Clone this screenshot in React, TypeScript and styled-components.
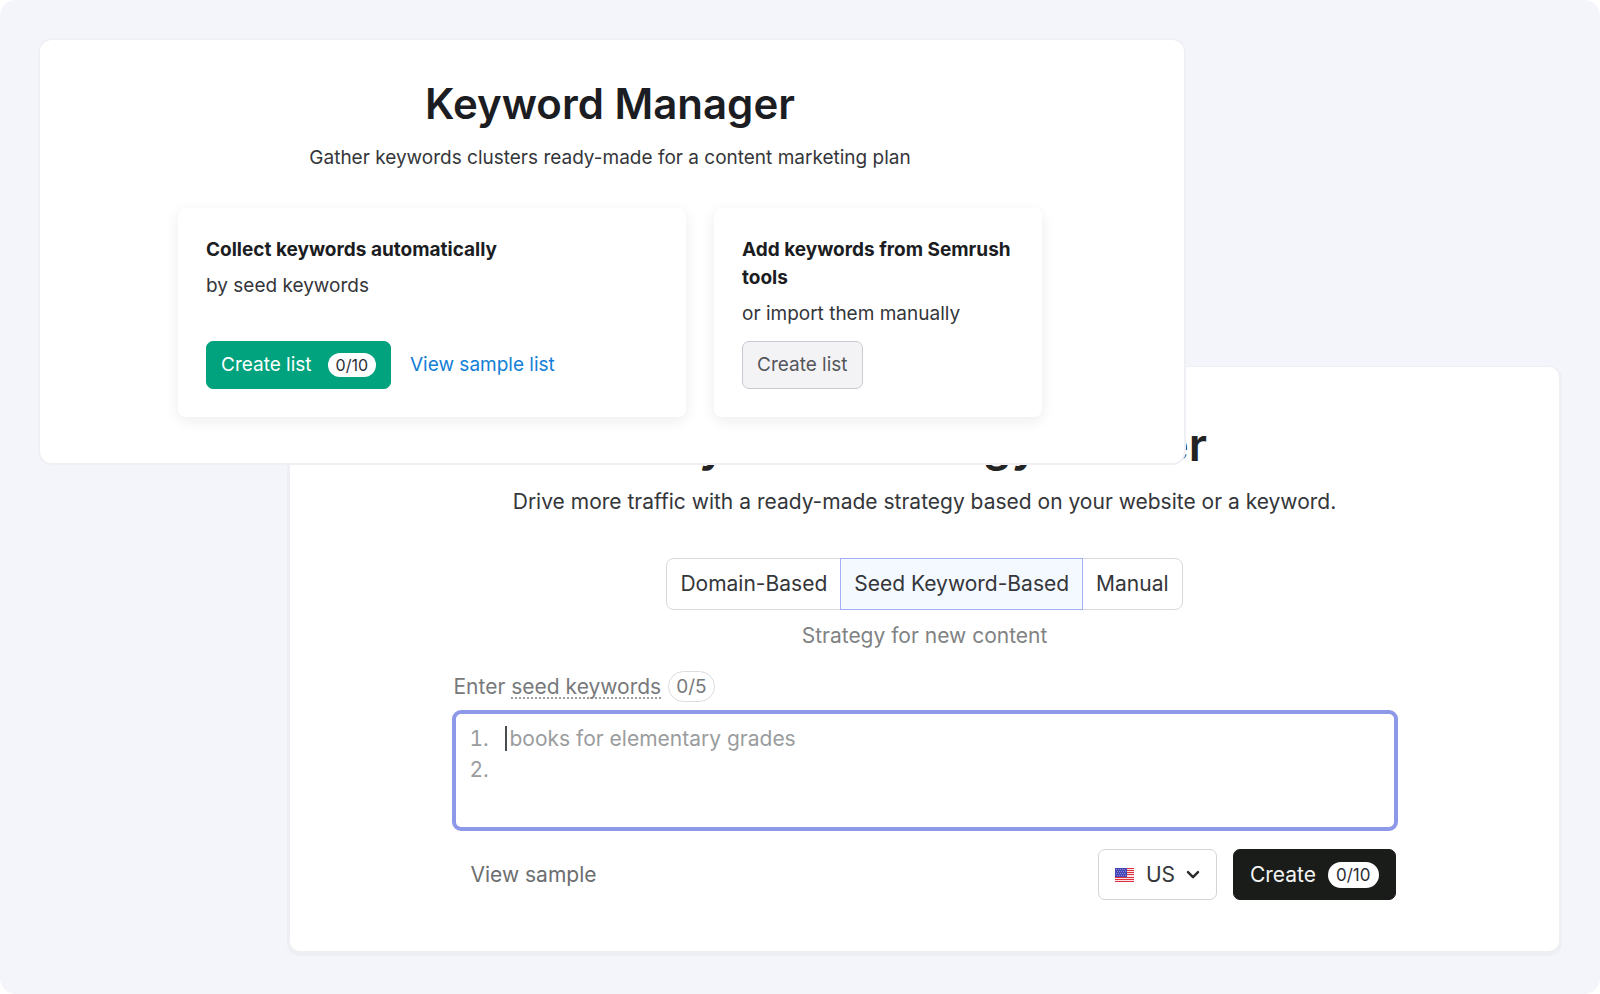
import React, { useState } from "react";
import styled, { createGlobalStyle, css } from "styled-components";

const GlobalStyle = createGlobalStyle`
  *, *::before, *::after { box-sizing: border-box; }
  body {
    margin: 0;
    background: #ffffff;
    color: #34363a;
    font-family: Inter, "Liberation Sans", sans-serif;
    font-size: 19px;
    line-height: 28px;
  }
  button, select, textarea { font: inherit; color: inherit; margin: 0; }
  h1, h2, h3, p, ol { margin: 0; padding: 0; }
`;

const Canvas = styled.main`
  display: grid;
  grid-template-columns: minmax(0, 249fr) minmax(0, 899fr) minmax(0, 374fr);
  align-items: start;
  min-height: 100vh;
  padding: 38px 40px 38px 38px;
  border-radius: 16px;
  background: #f4f5fa;
`;

const Panel = styled.section`
  display: flex;
  flex-direction: column;
  align-items: center;
  border-radius: 14px;
  background: #ffffff;
`;

const ManagerPanel = styled(Panel)`
  grid-area: 1 / 1 / 2 / 3;
  z-index: 1;
  padding: 38px 28px 46px 24px;
  border: 2px solid #f0f0f4;
`;

const BuilderPanel = styled(Panel)`
  grid-area: 1 / 2 / 2 / 4;
  margin: 329px 1px 0 3px;
  padding: 49px 24px 51px;
  border-radius: 10px;
  box-shadow: 0 2px 0 3px #eeeff2;
  font-size: 21px;
  line-height: 32px;
`;

const ManagerTitle = styled.h1`
  color: #1b1d22;
  font-size: 42px;
  font-weight: 600;
  line-height: 52px;
`;

const BuilderTitle = styled.h2`
  color: #232323;
  font-size: 46px;
  font-weight: 600;
  line-height: 56px;
`;

const Lead = styled.p`
  margin-top: 14px;
  text-align: center;
`;

const Cards = styled.div`
  display: flex;
  gap: 28px;
  width: 100%;
  max-width: 864px;
  margin-top: 36px;
`;

const Card = styled.article<{ $share: number }>`
  display: flex;
  flex: ${({ $share }) => `${$share} ${$share} ${$share}px`};
  flex-direction: column;
  align-items: flex-start;
  gap: 8px;
  min-width: 0;
  min-height: 209px;
  padding: 28px;
  border-radius: 8px;
  background: #ffffff;
  box-shadow: 0 4px 14px rgba(25, 27, 35, 0.08);
`;

const CardTitle = styled.h3`
  color: #1b1d22;
  font-size: 19px;
  font-weight: 700;
  line-height: 28px;
`;

const CardActions = styled.div`
  display: flex;
  align-items: center;
  gap: 19px;
  margin-top: auto;
`;

const tones = {
  green: css`
    border-color: #00a37d;
    background: #00a37d;
    color: #ffffff;
  `,
  gray: css`
    border-color: #c9cbd1;
    background: #f3f3f6;
    color: #54565c;
  `,
  black: css`
    border-color: #1a1c1a;
    background: #1a1c1a;
    color: #f4f4f4;
  `,
};

const Button = styled.button<{ $tone: keyof typeof tones; $large?: boolean }>`
  display: inline-flex;
  align-items: center;
  gap: ${({ $large }) => ($large ? 12 : 16)}px;
  height: ${({ $large }) => ($large ? 51 : 48)}px;
  padding: 0 ${({ $large }) => ($large ? 16 : 14)}px;
  border: 1px solid;
  border-radius: 7px;
  cursor: pointer;
  ${({ $tone }) => tones[$tone]}
`;

const Badge = styled.span<{ $large?: boolean }>`
  display: inline-flex;
  align-items: center;
  height: ${({ $large }) => ($large ? 26 : 24)}px;
  padding: 0 8px;
  border-radius: 13px;
  background: #ffffff;
  color: #2b2e33;
  font-size: ${({ $large }) => ($large ? 17 : 16)}px;
`;

const TextLink = styled.a<{ $muted?: boolean }>`
  color: ${({ $muted }) => ($muted ? "#6c6e70" : "#1280d6")};
  text-decoration: none;
  ${({ $muted }) => $muted && "padding-left: 17px;"}
`;

const Tabs = styled.div`
  display: flex;
  height: 52px;
  margin-top: 40px;
`;

const Tab = styled.button<{ $active: boolean }>`
  padding: 0 13px;
  border: 1px solid #d8d9dc;
  background: #ffffff;
  cursor: pointer;
  & + & { margin-left: -1px; }
  &:first-child { border-radius: 8px 0 0 8px; }
  &:last-child { border-radius: 0 8px 8px 0; }
  ${({ $active }) =>
    $active &&
    css`
      z-index: 1;
      border-color: #a3b0f5;
      background: #f4f8ff;
    `}
`;

const Hint = styled.p`
  margin-top: 10px;
  color: #808284;
`;

const Form = styled.form`
  display: flex;
  flex-direction: column;
  width: 100%;
  max-width: 942px;
  margin-top: 19px;
`;

const LabelRow = styled.div`
  display: flex;
  align-items: center;
  gap: 7px;
  height: 31px;
  color: #77797b;
`;

const Term = styled.span`
  text-decoration: underline dotted 2px #9a9c9e;
  text-decoration-skip-ink: none;
  text-underline-offset: 4px;
`;

const Counter = styled.span`
  display: inline-flex;
  align-items: center;
  height: 31px;
  padding: 0 7px;
  border: 1px solid #dcdde0;
  border-radius: 16px;
  font-size: 19px;
`;

const Field = styled.div`
  display: flex;
  height: 121px;
  margin: 8px -2px 0;
  padding: 9px 14px;
  border: 4px solid #8d98e8;
  border-radius: 9px;
  color: #9a9c9e;
  line-height: 31px;
`;

const Numbers = styled.ol`
  width: 35px;
  list-style: none;
  font-variant-numeric: tabular-nums;
`;

const Caret = styled.span`
  width: 2px;
  height: 25px;
  margin: 3px 3px 0 0;
  background: #4a4c4e;
`;

const Keywords = styled.textarea`
  flex: 1;
  padding: 0;
  border: 0;
  outline: 0;
  resize: none;
  background: transparent;
  color: #2b2e33;
  caret-color: transparent;
  &::placeholder { color: #9a9c9e; opacity: 1; }
`;

const Footer = styled.div`
  display: flex;
  align-items: center;
  gap: 16px;
  margin-top: 18px;
`;

const Spacer = styled.div`
  flex: 1;
`;

const CountryBox = styled.label`
  display: flex;
  align-items: center;
  height: 51px;
  padding: 0 16px;
  border: 1px solid #d3d4d7;
  border-radius: 7px;
`;

const CountrySelect = styled.select`
  appearance: none;
  margin: 0 10px 0 12px;
  padding: 0;
  border: 0;
  outline: 0;
  background: transparent;
`;

const Flag = () => (
  <svg width="19" height="14" viewBox="0 0 19 14" aria-hidden="true">
    <rect width="19" height="14" fill="#f8e4e8" />
    {[0, 2, 4, 6, 9, 11, 13].map((y) => (
      <rect key={y} y={y} width="19" height="1" fill="#e0303c" />
    ))}
    <rect width="12" height="9" fill="#4646b4" />
    {[1, 3, 5, 7].map((y) =>
      [1, 3, 5, 7, 9].map((x) => (
        <rect key={`${x}-${y}`} x={x + (y % 4 === 3 ? 1 : 0)} y={y} width="1" height="1" fill="#8686d8" />
      ))
    )}
  </svg>
);

const Chevron = () => (
  <svg width="14" height="10" viewBox="0 0 14 10" fill="none" aria-hidden="true">
    <path d="M2 2.2 7 7.2 12 2.2" stroke="#2b2d2f" strokeWidth="2.5" strokeLinecap="round" strokeLinejoin="round" />
  </svg>
);

const modes = ["Domain-Based", "Seed Keyword-Based", "Manual"];

export default function App() {
  const [mode, setMode] = useState(modes[1]);

  return (
    <>
      <GlobalStyle />
      <Canvas>
        <ManagerPanel>
          <ManagerTitle>Keyword Manager</ManagerTitle>
          <Lead>Gather keywords clusters ready-made for a content marketing plan</Lead>
          <Cards>
            <Card $share={508}>
              <CardTitle>Collect keywords automatically</CardTitle>
              <p>by seed keywords</p>
              <CardActions>
                <Button type="button" $tone="green">
                  Create list <Badge>0/10</Badge>
                </Button>
                <TextLink href="#sample-list">View sample list</TextLink>
              </CardActions>
            </Card>
            <Card $share={328}>
              <CardTitle>Add keywords from Semrush tools</CardTitle>
              <p>or import them manually</p>
              <CardActions>
                <Button type="button" $tone="gray">Create list</Button>
              </CardActions>
            </Card>
          </Cards>
        </ManagerPanel>

        <BuilderPanel>
          <BuilderTitle>Keyword Strategy Builder</BuilderTitle>
          <Lead>Drive more traffic with a ready-made strategy based on your website or a keyword.</Lead>
          <Tabs role="tablist">
            {modes.map((name) => (
              <Tab
                key={name}
                type="button"
                role="tab"
                aria-selected={name === mode}
                $active={name === mode}
                onClick={() => setMode(name)}
              >
                {name}
              </Tab>
            ))}
          </Tabs>
          <Hint>Strategy for new content</Hint>
          <Form onSubmit={(event) => event.preventDefault()}>
            <LabelRow>
              <label htmlFor="seed-keywords">
                Enter <Term>seed keywords</Term>
              </label>
              <Counter>0/5</Counter>
            </LabelRow>
            <Field>
              <Numbers>
                <li>1.</li>
                <li>2.</li>
              </Numbers>
              <Caret />
              <Keywords id="seed-keywords" placeholder="books for elementary grades" />
            </Field>
            <Footer>
              <TextLink href="#sample" $muted>View sample</TextLink>
              <Spacer />
              <CountryBox>
                <Flag />
                <CountrySelect aria-label="Country" defaultValue="US">
                  <option>US</option>
                </CountrySelect>
                <Chevron />
              </CountryBox>
              <Button type="submit" $tone="black" $large>
                Create <Badge $large>0/10</Badge>
              </Button>
            </Footer>
          </Form>
        </BuilderPanel>
      </Canvas>
    </>
  );
}
